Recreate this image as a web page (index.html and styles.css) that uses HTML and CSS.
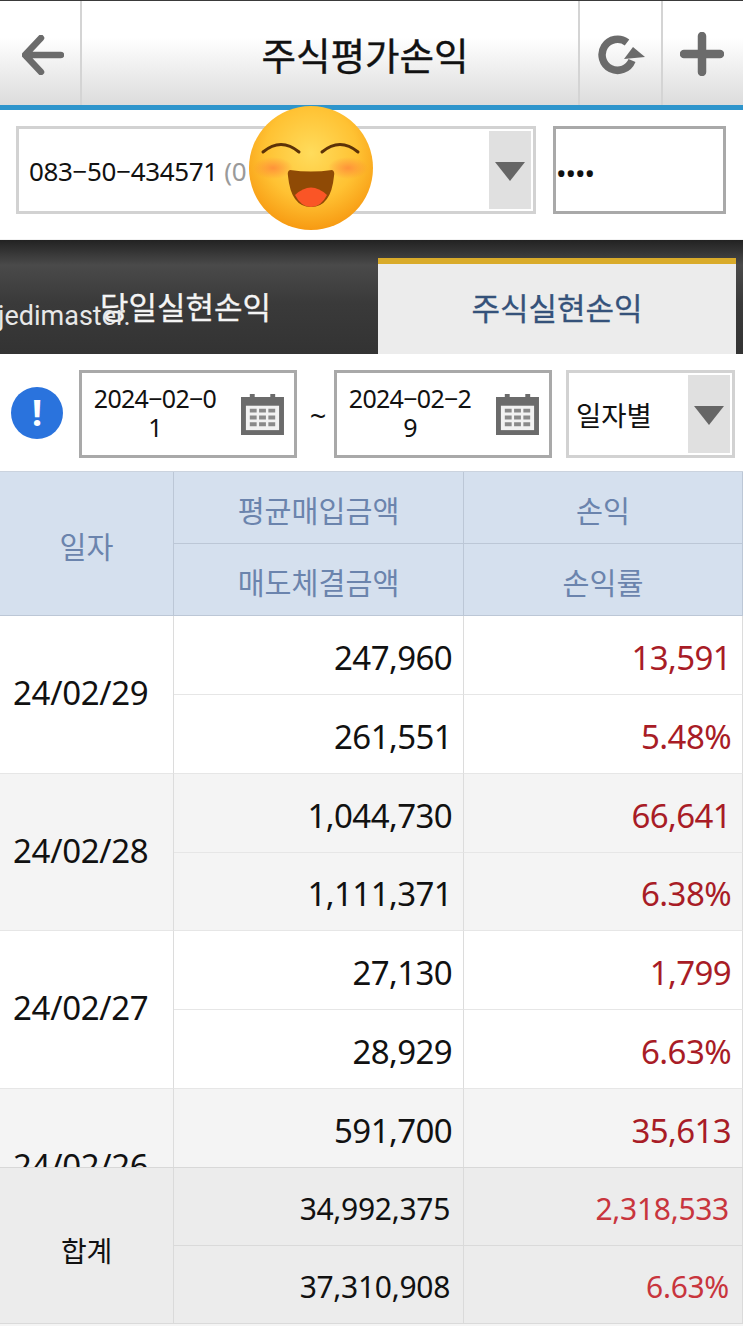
FILE: index.html
```html
<!DOCTYPE html>
<html lang="ko">
<head>
<meta charset="utf-8">
<title>주식평가손익</title>
<link rel="stylesheet" href="styles.css">
</head>
<body>
<div class="app">
  <header class="topbar">
    <button class="nav nav-back" aria-label="back">
      <svg width="42" height="40" viewBox="0 0 42 40"><path d="M19 3 3 20l16 17M4 20h35" fill="none" stroke="#6b6b6b" stroke-width="6.500" stroke-linecap="round" stroke-linejoin="round"/></svg>
    </button>
    <h1 class="title">주식평가손익</h1>
    <button class="nav nav-refresh" aria-label="refresh">
      <svg width="48" height="44" viewBox="0 0 48 44"><path d="M30 11.500A15.500 15.500 0 1 0 35 29.500" fill="none" stroke="#6b6b6b" stroke-width="7.500"/><path d="M36 16 48 26 27 28z" fill="#6b6b6b"/></svg>
    </button>
    <button class="nav nav-add" aria-label="add">
      <svg width="44" height="44" viewBox="0 0 44 44"><path d="M22 4v36M4 22h36" fill="none" stroke="#6b6b6b" stroke-width="8.500" stroke-linecap="round"/></svg>
    </button>
  </header>

  <section class="account">
    <div class="select select-account">
      <span class="acct-no">083−50−434571 <span class="acct-name">(0</span></span>
      <span class="caret"><i></i></span>
    </div>
    <div class="password">••••</div>
  </section>

  <nav class="tabs">
    <div class="tab">당일실현손익</div>
    <div class="tab tab-on">주식실현손익</div>
  </nav>

  <section class="filter">
    <span class="info">!</span>
    <div class="date"><span class="date-text">2024−02−01</span><svg class="cal" width="43" height="41" viewBox="0 0 44 42"><use href="#cal"/></svg></div>
    <span class="tilde">~</span>
    <div class="date"><span class="date-text">2024−02−29</span><svg class="cal" width="43" height="41" viewBox="0 0 44 42"><use href="#cal"/></svg></div>
    <div class="select select-period">
      <span class="period">일자별</span>
      <span class="caret"><i></i></span>
    </div>
  </section>

  <div class="thead grid">
    <div class="c date-col">일자</div>
    <div class="c">평균매입금액</div><div class="c">손익</div>
    <div class="c">매도체결금액</div><div class="c">손익률</div>
  </div>

  <div class="scroll">
    <div class="grid row"><div class="c date-col">24/02/29</div><div class="c num">247,960</div><div class="c num red">13,591</div><div class="c num">261,551</div><div class="c num red">5.48%</div></div>
    <div class="grid row alt"><div class="c date-col">24/02/28</div><div class="c num">1,044,730</div><div class="c num red">66,641</div><div class="c num">1,111,371</div><div class="c num red">6.38%</div></div>
    <div class="grid row"><div class="c date-col">24/02/27</div><div class="c num">27,130</div><div class="c num red">1,799</div><div class="c num">28,929</div><div class="c num red">6.63%</div></div>
    <div class="grid row alt"><div class="c date-col">24/02/26</div><div class="c num">591,700</div><div class="c num red">35,613</div><div class="c num"></div><div class="c num red"></div></div>
  </div>

  <div class="grid total">
    <div class="c date-col">합계</div>
    <div class="c num">34,992,375</div><div class="c num red">2,318,533</div>
    <div class="c num">37,310,908</div><div class="c num red">6.63%</div>
  </div>

  <span class="watermark">jedimaster.</span>
  <svg class="emoji" width="126" height="126" viewBox="0 0 126 126">
    <defs>
      <radialGradient id="face" cx="50%" cy="38%" r="62%"><stop offset="0" stop-color="#ffdc5c"/><stop offset=".6" stop-color="#ffc233"/><stop offset="1" stop-color="#f79a12"/></radialGradient>
      <radialGradient id="blush"><stop offset="0" stop-color="#ff8a3a" stop-opacity=".85"/><stop offset="1" stop-color="#ff8a3a" stop-opacity="0"/></radialGradient>
    </defs>
    <circle cx="63" cy="63" r="62" fill="url(#face)"/>
    <ellipse cx="25" cy="63" rx="20" ry="11" fill="url(#blush)"/>
    <ellipse cx="100" cy="63" rx="20" ry="11" fill="url(#blush)"/>
    <path d="M15 47q18-15 36 0M74 47q18-15 36 0" fill="none" stroke="#5c3208" stroke-width="3" stroke-linecap="round"/>
    <path d="M42 65q21 3 42 0q3 1 2 6q-3 31-23 31T40 71q-1-5 2-6z" fill="#8f4a05"/>
    <path d="M47 90q16-15 32 0q-6 12-16 12T47 90z" fill="#fa5526"/>
  </svg>
</div>
<svg class="defs" width="0" height="0">
  <symbol id="cal" viewBox="0 0 44 42">
    <path d="M0 3h9V0h5v3h16V0h5v3h9v39H0z" fill="#6b6b6b"/>
    <rect x="5" y="12" width="34" height="25" fill="#f2f2f2"/>
    <path d="M9 15h7v4H9zM18.500 15h7v4h-7zM28 15h7v4h-7zM9 22h7v4H9zM18.500 22h7v4h-7zM28 22h7v4h-7zM9 29h7v4H9zM18.500 29h7v4h-7zM28 29h7v4h-7z" fill="#8a8a8a"/>
  </symbol>
</svg>
</body>
</html>
```
FILE: styles.css
```css
* { box-sizing: border-box; }
html, body { margin: 0; padding: 0; }
body {
  font-family: "Noto Sans", "Noto Sans CJK KR", sans-serif;
  background: #fff;
  color: #111;
}
.app {
  position: relative;
  width: 743px;
  height: 1326px;
  overflow: hidden;
  display: flex;
  flex-direction: column;
}
.defs { position: absolute; }

/* top bar */
.topbar {
  flex: none;
  height: 110px;
  display: flex;
  border-top: 1px solid #3a3a3a;
  border-bottom: 5px solid #2e95cc;
  background: linear-gradient(#fff 0, #fff 35%, #dcdcdc 100%);
}
.nav {
  flex: none;
  padding: 0;
  border: 0;
  background: none;
  display: flex;
  align-items: center;
  justify-content: center;
}
.nav-back { width: 82px; border-right: 2px solid #d4d4d4; padding: 4px 0 0 6px; }
.nav-refresh { width: 83px; border-left: 2px solid #d4d4d4; }
.nav-add { width: 82px; border-left: 2px solid #d4d4d4; padding: 2px 2px 0 0; }
.title {
  flex: 1;
  margin: 0;
  padding: 3px 0 0 70px;
  text-align: center;
  font-size: 37.500px;
  font-weight: 400;
  line-height: 104px;
  -webkit-text-stroke: .4px #111;
}

/* account row */
.account {
  flex: none;
  height: 130px;
  padding: 16px 17px 0 16px;
  display: flex;
  gap: 17px;
  align-items: flex-start;
  border-bottom: 1px solid #f2f2f2;
}
.select {
  background: #fff;
  border: 3px solid #d2d2d2;
  display: flex;
  align-items: center;
  position: relative;
}
.select-account { width: 520px; height: 88px; padding: 2px 0 0 10px; }
.acct-no { font-size: 26px; letter-spacing: -.35px; }
.acct-name { color: #9a9a9a; }
.caret {
  position: absolute;
  top: 2px; right: 2px; bottom: 2px;
  width: 42px;
  background: #e0e0e0;
  display: flex;
  align-items: center;
  justify-content: center;
  padding-top: 2px;
}
.caret i {
  width: 0; height: 0;
  border-left: 15px solid transparent;
  border-right: 15px solid transparent;
  border-top: 19px solid #666;
}
.password {
  width: 173px;
  height: 88px;
  border: 3px solid #a9a9a9;
  font-size: 28px;
  line-height: 88px;
  letter-spacing: -1px;
  color: #111;
}

/* tabs */
.tabs {
  flex: none;
  height: 114px;
  display: flex;
  background: linear-gradient(#222 0, #4a4a4a 22%, #3a3a3a 55%, #333 100%);
}
.tab {
  width: 371px;
  padding-top: 45px;
  text-align: center;
  font-size: 31px;
  font-weight: 400;
  line-height: 44px;
  color: #f4f4f4;
  -webkit-text-stroke: .3px #f4f4f4;
}
.tab-on {
  width: 358px;
  margin: 18px 7px 0 auto;
  padding-top: 22px;
  background: #ececec;
  border-top: 6px solid #d9ab2a;
  color: #35527a;
  -webkit-text-stroke: .3px #35527a;
}

/* filter */
.filter {
  flex: none;
  height: 117px;
  padding: 16px 8px 0 11px;
  display: flex;
  align-items: flex-start;
}
.info {
  flex: none;
  width: 52px;
  height: 52px;
  margin-top: 17px;
  margin-right: 16px;
  border-radius: 50%;
  background: #2a73dd;
  color: #fff;
  font: 700 36px/52px "Noto Sans", sans-serif;
  text-align: center;
}
.date {
  flex: none;
  width: 218px;
  height: 88px;
  border: 3px solid #a9a9a9;
  display: flex;
  align-items: center;
  padding: 0 0 0 11px;
}
.date-text {
  width: 124px;
  margin: -2px 24px 0 0;
  font-size: 25px;
  line-height: 29px;
  text-align: center;
  word-break: break-all;
  letter-spacing: -.7px;
}
.cal { flex: none; }
.tilde {
  flex: none;
  width: 37px;
  padding: 25px 0 0 5px;
  text-align: center;
  font-size: 29px;
}
.select-period { width: 169px; height: 88px; margin-left: 14px; padding-left: 7px; }
.period { font-size: 27.500px; }

/* table */
.grid {
  display: grid;
  grid-template-columns: 174px 290px 1fr;
  grid-template-rows: 1fr 1fr;
  flex: none;
}
.c {
  display: flex;
  align-items: center;
  justify-content: flex-end;
  padding-right: 11px;
  border-right: 1px solid #dcdcdc;
  border-bottom: 1px solid #e6e6e6;
  font-size: 33px;
  letter-spacing: -.6px;
}
.num { padding-top: 5px; }
.date-col {
  grid-row: 1 / span 2;
  justify-content: flex-start;
  padding-left: 13px;
  padding-bottom: 4px;
  letter-spacing: -.3px;
}
.thead {
  height: 145px;
  background: #d5e0ee;
  border-top: 1px solid #cbd3de;
}
.thead .c {
  justify-content: center;
  padding: 3px 0 0;
  font-size: 29.300px;
  color: #6b84ad;
  border-color: #bcc7d6;
  letter-spacing: 0;
}
.scroll {
  flex: 1;
  min-height: 0;
  overflow: hidden;
}
.row { height: 157.700px; }
.alt { background: #f4f4f4; }
.red { color: #a81c26; }
.total {
  height: 159px;
  grid-template-rows: 78px 1fr;
  background: #ececec;
  border-top: 1px solid #d8d8d8;
  border-bottom: 2px solid #f5f5f5;
}
.total .date-col {
  justify-content: center;
  padding: 8px 0 0;
  font-size: 28px;
}
.total .c { border-color: #dadada; }
.total .num { font-size: 30px; padding-top: 4px; padding-right: 13px; letter-spacing: -.3px; }
.total .red { color: #c8353d; }

/* overlays */
.watermark {
  position: absolute;
  left: -2px;
  top: 298px;
  font: 400 27px/36px Roboto, sans-serif;
  color: #e8e8e8;
}
.emoji {
  position: absolute;
  left: 248px;
  top: 105px;
}
```
